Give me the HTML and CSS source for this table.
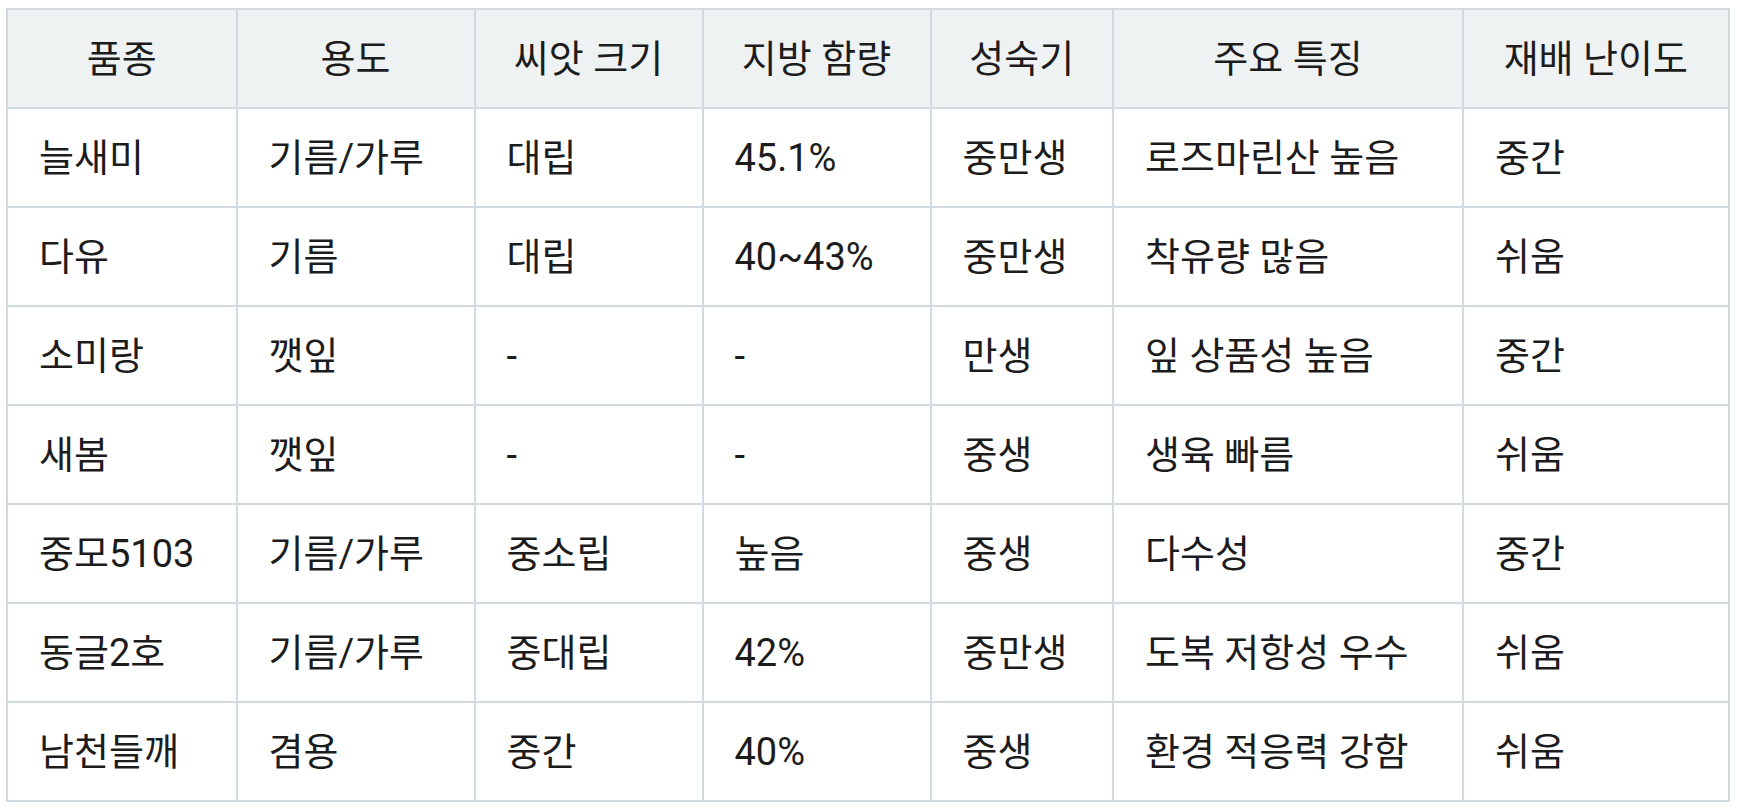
FILE: index.html
```html
<!DOCTYPE html>
<html lang="ko">
<head>
<meta charset="utf-8">
<link rel="stylesheet" href="styles.css">
</head>
<body>
<table class="varieties">
  <colgroup>
    <col class="c1"><col class="c2"><col class="c3"><col class="c4"><col class="c5"><col class="c6"><col class="c7">
  </colgroup>
  <thead>
    <tr><th>품종</th><th>용도</th><th>씨앗 크기</th><th>지방 함량</th><th>성숙기</th><th>주요 특징</th><th>재배 난이도</th></tr>
  </thead>
  <tbody>
    <tr><td>늘새미</td><td>기름/가루</td><td>대립</td><td>45.1%</td><td>중만생</td><td>로즈마린산 높음</td><td>중간</td></tr>
    <tr><td>다유</td><td>기름</td><td>대립</td><td>40~43%</td><td>중만생</td><td>착유량 많음</td><td>쉬움</td></tr>
    <tr><td>소미랑</td><td>깻잎</td><td>-</td><td>-</td><td>만생</td><td>잎 상품성 높음</td><td>중간</td></tr>
    <tr><td>새봄</td><td>깻잎</td><td>-</td><td>-</td><td>중생</td><td>생육 빠름</td><td>쉬움</td></tr>
    <tr><td>중모5103</td><td>기름/가루</td><td>중소립</td><td>높음</td><td>중생</td><td>다수성</td><td>중간</td></tr>
    <tr><td>동글2호</td><td>기름/가루</td><td>중대립</td><td>42%</td><td>중만생</td><td>도복 저항성 우수</td><td>쉬움</td></tr>
    <tr><td>남천들깨</td><td>겸용</td><td>중간</td><td>40%</td><td>중생</td><td>환경 적응력 강함</td><td>쉬움</td></tr>
  </tbody>
</table>
</body>
</html>
```

FILE: styles.css
```css
html, body {
  margin: 0;
  padding: 0;
  background: #ffffff;
}

body {
  padding: 8px 0 0 6px;
  font-family: Roboto, "Noto Sans CJK KR", sans-serif;
  color: #1c1c1c;
}

.varieties {
  border-collapse: collapse;
  table-layout: fixed;
  width: 1723px;
  font-size: 38px;
}

.c1 { width: 229.5px; }
.c2 { width: 238px; }
.c3 { width: 228px; }
.c4 { width: 228px; }
.c5 { width: 182.5px; }
.c6 { width: 350px; }
.c7 { width: 265.5px; }

.varieties th,
.varieties td {
  border: 2px solid #d2dce0;
  height: 97px;
  padding: 0 31px;
  line-height: 54px;
  vertical-align: middle;
  white-space: nowrap;
}

.varieties th {
  background: #eef2f3;
  font-weight: 400;
  text-align: center;
}

.varieties td {
  text-align: left;
}
```
